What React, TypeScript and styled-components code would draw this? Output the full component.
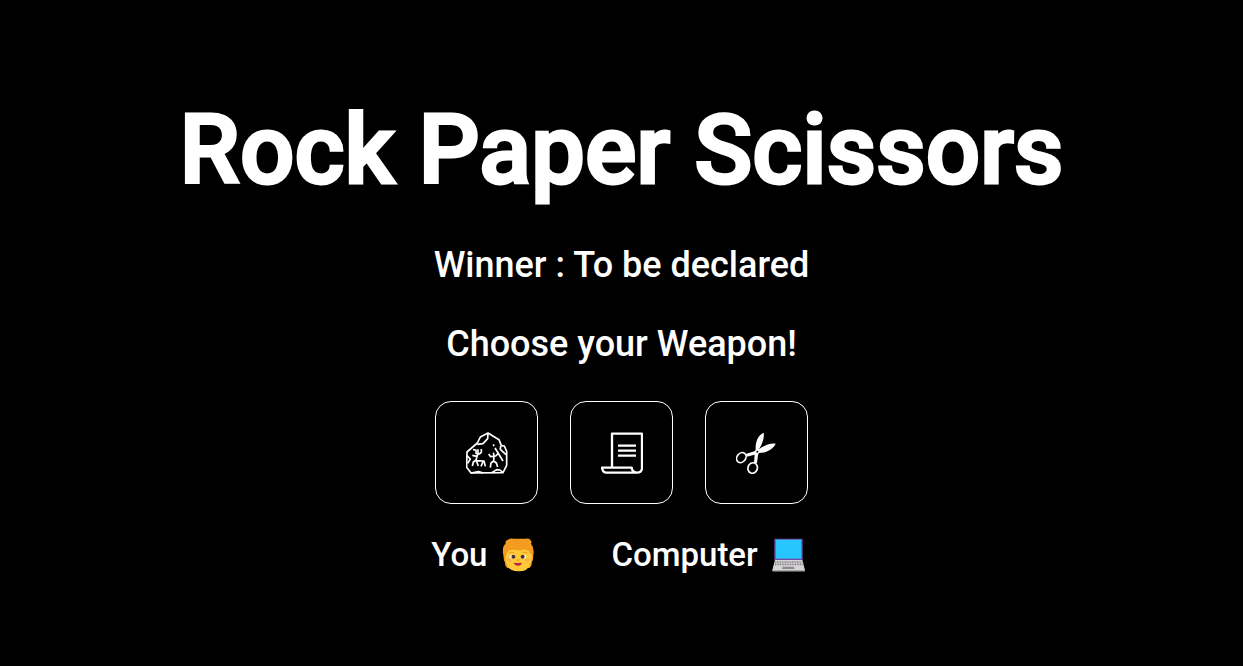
import styled, { createGlobalStyle } from "styled-components";

const GlobalStyle = createGlobalStyle`
  *, *::before, *::after { box-sizing: border-box; }
  body {
    margin: 0;
    background: #000;
    color: #fff;
    font-family: Roboto, "Liberation Sans", sans-serif;
  }
`;

const Game = styled.main`
  min-height: 100vh;
  display: flex;
  flex-direction: column;
  align-items: center;
  justify-content: center;
  text-align: center;
`;

const Title = styled.h1`
  margin: 0;
  font-size: 96px;
  line-height: 116px;
  font-weight: 500;
  -webkit-text-stroke: 3px currentColor;
`;

const Message = styled.h2`
  margin: 36px 0 0;
  font-size: 36px;
  line-height: 43px;
  font-weight: 500;
`;

const Weapons = styled.div`
  display: flex;
  justify-content: center;
  gap: 32px;
  margin-top: 35px;
`;

const WeaponButton = styled.button`
  display: grid;
  place-items: center;
  width: 103px;
  height: 103px;
  padding: 0;
  color: inherit;
  background: transparent;
  border: 1px solid #fff;
  border-radius: 16px;
  cursor: pointer;
`;

const WeaponIcon = styled.svg`
  width: 42px;
  height: 42px;
  fill: none;
  stroke: currentColor;
  stroke-linejoin: round;
`;

const Players = styled.div`
  display: flex;
  gap: 70px;
  margin-top: 32px;
`;

const Player = styled.h3`
  display: flex;
  align-items: center;
  gap: 8px;
  margin: 0;
  font-size: 33px;
  line-height: 38px;
  font-weight: 500;
`;

const Emoji = styled.svg`
  width: 46px;
  height: 34px;
  padding: 0 6px;
`;

const Rock = () => (
  <WeaponIcon viewBox="30 28 126 126" strokeWidth="5" aria-hidden="true">
    <path d="M96 31L73 43L64 61L33 88L32 134L45 151L141 150L152 128V86L145 70L136 69L129 51Z" />
    <path d="M96 31L95 48L81 63L64 65M134 70L133 80L150 96M32 98L43 109L35 122M45 151L68 147L82 151M106 151L122 141L132 142L141 150" />
    <path d="M51 81L60 82V92L70 94L76 89V79M66 80V93L63 101L49 98M63 100L60 114L84 115L88 131M60 112L52 118L49 130M61 115L67 130M82 115L75 131" />
    <path d="M98 94L104 102L119 100L126 93V87M112 90L114 98L113 115L105 121L103 135M113 115L121 121L125 133M117 76L141 115M113 65V71" />
  </WeaponIcon>
);

const Paper = () => (
  <WeaponIcon viewBox="30 28 126 126" strokeWidth="7" aria-hidden="true">
    <path d="M63 133V33H153V138Q151 150 139 150H46Q35 149 33 135H122Q123 149 137 150" />
    <path d="M81 69H135M81 84H135M81 99H135" />
  </WeaponIcon>
);

const Scissors = () => (
  <WeaponIcon viewBox="32 28 126 126" strokeWidth="5" aria-hidden="true">
    <path
      d="M91 82C90 63 95 38 115 30C118 46 109 66 101 80C116 68 136 60 151 63C144 80 121 91 101 91L98 97L95 121L86 120L88 96L64 102L61 94L87 86Z"
      fill="currentColor"
      stroke="none"
    />
    <ellipse cx="48" cy="105" rx="13" ry="16" transform="rotate(38 48 105)" />
    <ellipse cx="82" cy="136" rx="14" ry="16" transform="rotate(20 82 136)" />
    <circle cx="96" cy="87" r="3" fill="#000" stroke="none" />
  </WeaponIcon>
);

const PersonEmoji = () => (
  <Emoji viewBox="20 22 102 102" role="img" aria-label="person">
    <path d="M29 69Q25 82 32 96Q31 106 39 112H105Q114 106 112 96Q120 82 115 67Z" fill="#f59d1c" />
    <path d="M34 64Q34 44 72 44T112 64V84Q112 94 107 99Q103 122 72 122T38 99Q34 94 34 84Z" fill="#ffca38" />
    <path d="M27 73Q22 47 34 39Q31 29 41 27Q48 22 58 24H94Q107 22 110 31Q113 34 110 39Q121 52 117 74Q110 74 104 61Q97 59 92 56Q80 62 59 57Q51 57 43 60Q37 67 33 76Q29 77 27 73Z" fill="#f39c1f" />
    <path d="M45 67Q52 62 59 66M85 66Q92 62 99 67" fill="none" stroke="#d98324" strokeWidth="2" />
    <ellipse cx="45" cy="88" rx="7" ry="5" fill="#ffad55" />
    <ellipse cx="99" cy="88" rx="7" ry="5" fill="#ffad55" />
    <ellipse cx="54" cy="78" rx="8" ry="6" fill="#fff" />
    <ellipse cx="88" cy="78" rx="8" ry="6" fill="#fff" />
    <circle cx="57" cy="78" r="6" fill="#493337" />
    <circle cx="85" cy="78" r="6" fill="#493337" />
    <path d="M67 87Q71 91 76 87" fill="none" stroke="#ef9130" strokeWidth="3" />
    <path d="M58 96Q70 98 83 96Q81 105 71 105T58 96Z" fill="#bd2346" />
  </Emoji>
);

const LaptopEmoji = () => (
  <Emoji viewBox="23 22 102 102" role="img" aria-label="laptop">
    <rect x="30" y="24" width="85" height="66" rx="2" fill="#7149a5" />
    <rect x="34" y="27" width="77" height="57" fill="#28c6ff" />
    <path d="M32 88H114L122 119Q122 122 119 122H27Q23 122 24 118Z" fill="#d6d4d6" />
    <path d="M24 118H122V120Q122 122 119 122H27Q24 122 24 120Z" fill="#aaa7aa" />
    <path d="M33 94H113M32 101H115" stroke="#858187" strokeWidth="5" strokeDasharray="3 2" />
    <path d="M55 108H89L91 115H53Z" fill="#8d898e" />
  </Emoji>
);

const weapons = [
  { name: "Rock", Icon: Rock },
  { name: "Paper", Icon: Paper },
  { name: "Scissors", Icon: Scissors },
];

export default function App() {
  return (
    <Game>
      <GlobalStyle />
      <Title>Rock Paper Scissors</Title>
      <Message>Winner : To be declared</Message>
      <Message>Choose your Weapon!</Message>
      <Weapons>
        {weapons.map(({ name, Icon }) => (
          <WeaponButton key={name} type="button" aria-label={name}>
            <Icon />
          </WeaponButton>
        ))}
      </Weapons>
      <Players>
        <Player>You <PersonEmoji /></Player>
        <Player>Computer <LaptopEmoji /></Player>
      </Players>
    </Game>
  );
}
